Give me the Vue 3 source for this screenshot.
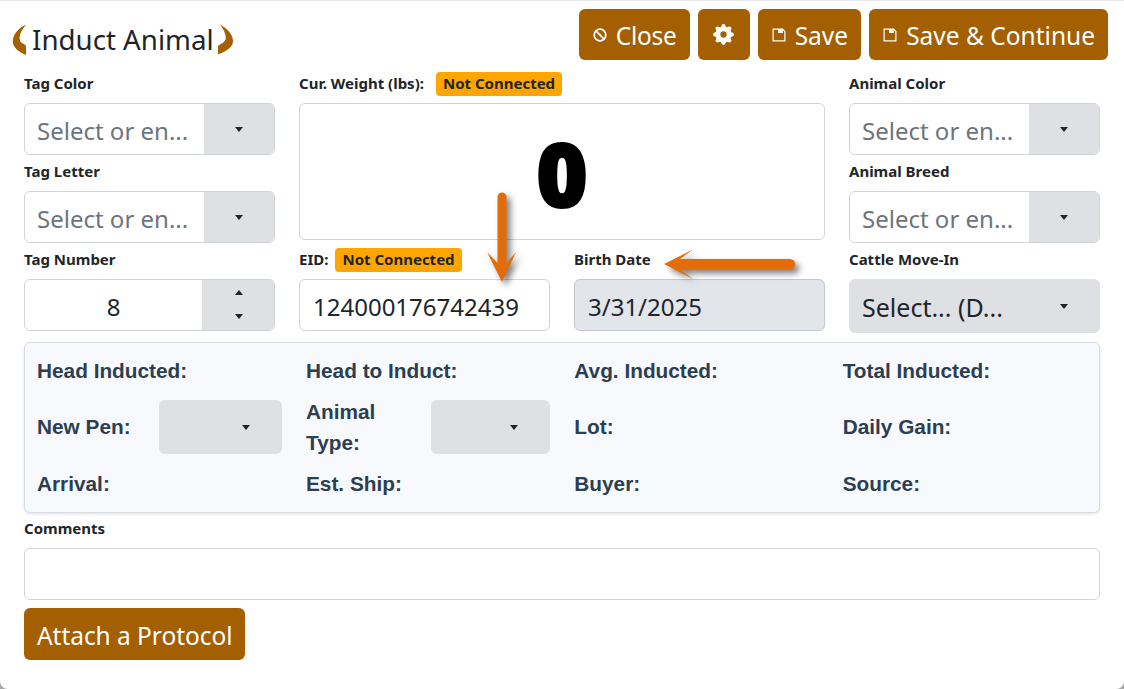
<script setup>
const panelTop = ['Head Inducted:', 'Head to Induct:', 'Avg. Inducted:', 'Total Inducted:']
const panelBottom = ['Arrival:', 'Est. Ship:', 'Buyer:', 'Source:']
</script>

<template>
  <div class="modal">
    <header class="head">
      <div class="title">
        <svg class="horn" width="17" height="32" viewBox="0 0 17 32">
          <path d="M14 0.5C7 4 0.8 10 0.8 17.5C0.8 23.5 7 28 14 31L14 22C13 19.5 7.6 19.5 7.6 14.5C7.6 9.5 10.5 5 14 0.5Z" />
        </svg>
        <h1>Induct Animal</h1>
        <svg class="horn" width="17" height="32" viewBox="0 0 17 32">
          <path d="M3 0.5C9.5 4 16 10 16 17C16 23.5 9 27.5 1 30.5L1 22C3 19.5 8.8 19 8.8 14C8.8 9.5 6.5 5 3 0.5Z" />
        </svg>
      </div>
      <div class="actions">
        <button class="btn close">
          <svg class="ic" width="14" height="14" viewBox="0 0 14 14" fill="none" stroke="#fff" stroke-width="1.7">
            <circle cx="7" cy="7" r="5.8" /><path d="M2.9 2.9L11.1 11.1" />
          </svg>
          Close
        </button>
        <button class="btn gear">
          <svg width="21" height="21" viewBox="0 0 16 16" fill="#fff">
            <path d="M9.405 1.05c-.413-1.4-2.397-1.4-2.81 0l-.1.34a1.464 1.464 0 0 1-2.105.872l-.31-.17c-1.283-.698-2.686.705-1.987 1.987l.169.311c.446.82.023 1.841-.872 2.105l-.34.1c-1.4.413-1.4 2.397 0 2.81l.34.1a1.464 1.464 0 0 1 .872 2.105l-.17.31c-.698 1.283.705 2.686 1.987 1.987l.311-.169a1.464 1.464 0 0 1 2.105.872l.1.34c.413 1.4 2.397 1.4 2.81 0l.1-.34a1.464 1.464 0 0 1 2.105-.872l.31.17c1.283.698 2.686-.705 1.987-1.987l-.169-.311a1.464 1.464 0 0 1 .872-2.105l.34-.1c1.4-.413 1.4-2.397 0-2.81l-.34-.1a1.464 1.464 0 0 1-.872-2.105l.17-.31c.698-1.283-.705-2.686-1.987-1.987l-.311.169a1.464 1.464 0 0 1-2.105-.872l-.1-.34zM8 10.4a2.4 2.4 0 1 1 0-4.8 2.4 2.4 0 0 1 0 4.8z" />
          </svg>
        </button>
        <button class="btn">
          <svg class="ic" width="14" height="14" viewBox="0 0 14 14" fill="none" stroke="#fff" stroke-width="1.2">
            <path d="M1.1 1.1H10.6L12.9 3.4V12.9H1.1Z" />
            <rect x="6" y="1" width="4.8" height="4" fill="#fff" stroke="none" />
          </svg>
          Save
        </button>
        <button class="btn">
          <svg class="ic" width="14" height="14" viewBox="0 0 14 14" fill="none" stroke="#fff" stroke-width="1.2">
            <path d="M1.1 1.1H10.6L12.9 3.4V12.9H1.1Z" />
            <rect x="6" y="1" width="4.8" height="4" fill="#fff" stroke="none" />
          </svg>
          Save &amp; Continue
        </button>
      </div>
    </header>

    <main class="body">
      <section class="grid">
        <div class="field">
          <label>Tag Color</label>
          <div class="combo"><span class="ph">Select or en...</span><span class="addon"><i class="caret" /></span></div>
        </div>

        <div class="field weight">
          <label class="wide">Cur. Weight (lbs): <span class="badge">Not Connected</span></label>
          <div class="scale">0</div>
        </div>

        <div class="field">
          <label>Animal Color</label>
          <div class="combo"><span class="ph">Select or en...</span><span class="addon"><i class="caret" /></span></div>
        </div>

        <div class="field">
          <label>Tag Letter</label>
          <div class="combo"><span class="ph">Select or en...</span><span class="addon"><i class="caret" /></span></div>
        </div>

        <div class="field">
          <label>Animal Breed</label>
          <div class="combo"><span class="ph">Select or en...</span><span class="addon"><i class="caret" /></span></div>
        </div>

        <div class="field">
          <label>Tag Number</label>
          <div class="combo">
            <span class="val center">8</span>
            <span class="addon stepper"><i class="caret up" /><i class="caret" /></span>
          </div>
        </div>

        <div class="field">
          <label class="eid">EID: <span class="badge">Not Connected</span></label>
          <div class="combo"><span class="val">124000176742439</span></div>
        </div>

        <div class="field">
          <label>Birth Date</label>
          <div class="combo readonly"><span class="val">3/31/2025</span></div>
        </div>

        <div class="field">
          <label>Cattle Move-In</label>
          <div class="pick big"><span class="val">Select... (D...</span><i class="caret" /></div>
        </div>
      </section>

      <section class="panel">
        <div v-for="t in panelTop" :key="t" class="stat">{{ t }}</div>

        <div class="with-pick pen">
          <span class="stat">New Pen:</span>
          <div class="pick"><i class="caret" /></div>
        </div>
        <div class="with-pick type">
          <span>Animal Type:</span>
          <div class="pick"><i class="caret" /></div>
        </div>
        <div class="stat">Lot:</div>
        <div class="stat">Daily Gain:</div>

        <div v-for="t in panelBottom" :key="t" class="stat">{{ t }}</div>
      </section>

      <section class="comments">
        <label>Comments</label>
        <div class="combo"></div>
      </section>

      <button class="btn attach">Attach a Protocol</button>
    </main>

    <svg class="arrow" width="1124" height="689" viewBox="0 0 1124 689" fill="#e36c09">
      <path d="M497.5 197a4.5 4.5 0 0 1 9 0V263L516 252L502 282L487 252L497.5 263Z" />
      <path d="M664 264L693 249.5L680 259H790a5 5 0 0 1 0 10.5H680L693 279Z" />
    </svg>
  </div>
</template>

<style>
html, body { background: #a9a9a9; overflow: hidden; }
</style>

<style scoped>
.modal {
  position: relative;
  box-sizing: border-box;
  height: 689px;
  background: #fff;
  border-top: 1px solid #e9e9e9;
  border-radius: 0 0 8px 8px;
  color: #212529;
  font-family: "Noto Sans", sans-serif;
  overflow: hidden;
}
.head {
  display: flex;
  justify-content: space-between;
  align-items: flex-start;
  padding: 8px 16px 0 12px;
  height: 52px;
}
.title {
  display: flex;
  align-items: center;
  height: 46px;
  margin-top: 8px;
}
.horn { fill: #a35f00; flex: none; }
h1 {
  margin: 0 3px 0 3px;
  font-size: 27.7px;
  font-weight: 400;
  line-height: 1.2;
  white-space: nowrap;
}
.actions { display: flex; gap: 8px; }
.btn {
  box-sizing: border-box;
  display: inline-flex;
  align-items: center;
  justify-content: center;
  height: 51px;
  padding: 2px 13px 0;
  background: #a35f00;
  color: #fff;
  border: 0;
  border-radius: 6px;
  font-family: inherit;
  font-size: 24.5px;
  white-space: nowrap;
}
.close { letter-spacing: -.3px; width: 111px; }
.ic { margin: -2px 9px 0 1px; }
.gear { width: 52px; padding: 0; }
.body { padding: 11px 24px 0; }
.grid {
  display: grid;
  grid-template-columns: repeat(4, 251px);
  column-gap: 24px;
  row-gap: 5px;
}
.field { min-width: 0; }
.weight { grid-column: 2 / span 2; grid-row: 1 / span 2; }
label {
  box-sizing: border-box;
  display: flex;
  align-items: center;
  gap: 6px;
  height: 24px;
  padding-bottom: 2px;
  margin-bottom: 7px;
  font-size: 15px;
  font-weight: 700;
  white-space: nowrap;
}
.wide { gap: 12px; }
.eid { gap: 7px; }
.badge {
  display: inline-block;
  margin-top: 2px;
  padding: 0 7px;
  height: 24px;
  line-height: 23px;
  background: #ffa500;
  border-radius: 4px;
  font-size: 15px;
}
.combo {
  box-sizing: border-box;
  display: flex;
  height: 52px;
  background: #fff;
  border: 1px solid #ced4da;
  border-radius: 6px;
  overflow: hidden;
}
.ph, .val {
  flex: 1;
  min-width: 0;
  padding-left: 12px;
  font-size: 24px;
  white-space: nowrap;
  overflow: hidden;
}
.combo .ph, .combo .val { line-height: 54px; }
.val { padding-left: 13px; }
.ph { color: #6c757d; }
.center { padding: 0; text-align: center; }
.readonly { background: #e2e5ea; border-color: #c4c8ce; }
.addon {
  flex: none;
  display: flex;
  align-items: center;
  justify-content: center;
  width: 70px;
  background: #dee0e4;
}
.stepper {
  box-sizing: border-box;
  width: 72px;
  padding: 0 0 2px 2px;
  flex-direction: column;
  gap: 19px;
}
.caret {
  display: block;
  flex: none;
  width: 0;
  height: 0;
  border-left: 4.5px solid transparent;
  border-right: 4.5px solid transparent;
  border-top: 5px solid #212529;
}
.caret.up { border-top: 0; border-bottom: 5px solid #212529; }
.scale {
  box-sizing: border-box;
  height: 137px;
  padding-top: 2px;
  display: flex;
  align-items: center;
  justify-content: center;
  border: 1px solid #ced4da;
  border-radius: 6px;
  font-size: 88px;
  font-weight: 900;
  line-height: 1;
  color: #000;
  -webkit-text-stroke: 2px #000;
}
.pick {
  box-sizing: border-box;
  display: flex;
  align-items: center;
  justify-content: flex-end;
  height: 54px;
  padding-right: 32px;
  background: #dee0e4;
  border-radius: 6px;
}
.pick .val {
  font-size: 25px;
  line-height: 52px;
  padding-top: 2px;
}
.panel {
  box-sizing: border-box;
  display: grid;
  grid-template-columns: repeat(4, 1fr);
  grid-template-rows: 32px 54px 34px;
  column-gap: 24px;
  row-gap: 13px;
  align-items: center;
  height: 171px;
  margin-top: 9px;
  padding: 12px 12px 10px;
  background: #f7f9fc;
  border: 1px solid #d9dce1;
  border-radius: 6px;
  box-shadow: 0 1px 3px rgba(0, 0, 0, .12);
  font-family: "Liberation Sans", Arial, sans-serif;
  font-size: 20.8px;
  font-weight: 700;
  line-height: 31px;
  color: #2c3e50;
}
.stat { padding-bottom: 2px; }
.with-pick {
  display: grid;
  align-items: center;
}
.pen { grid-template-columns: 122px 123px; }
.type { grid-template-columns: 125px 119px; }
.comments { margin-top: 4px; }
.attach {
  margin-top: 8px;
  height: 52px;
  letter-spacing: -.05px;
}
.arrow {
  position: absolute;
  left: 0;
  top: -1px;
  pointer-events: none;
  filter: drop-shadow(4px 4px 3px rgba(0, 0, 0, .5));
}
</style>
